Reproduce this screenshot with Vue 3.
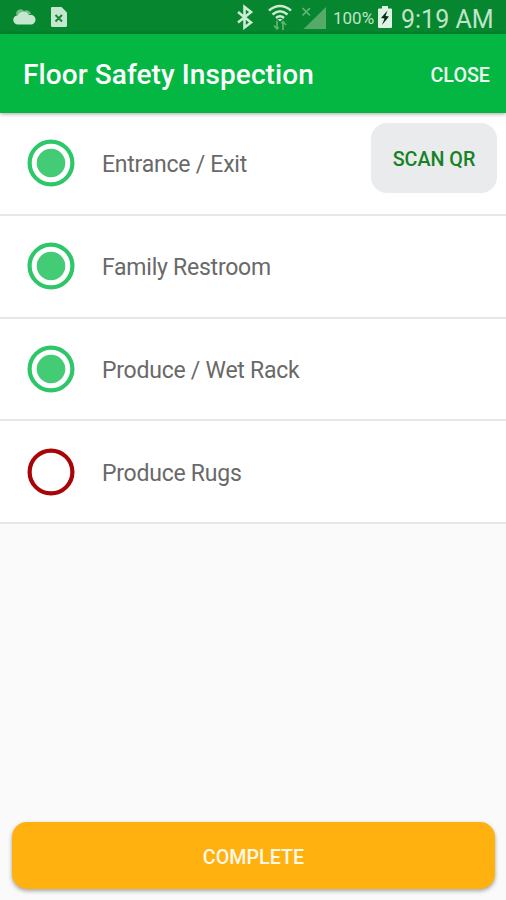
<script setup>
const items = [
  { label: 'Entrance / Exit', done: true, scan: true },
  { label: 'Family Restroom', done: true },
  { label: 'Produce / Wet Rack', done: true },
  { label: 'Produce Rugs', done: false },
]
</script>

<template>
  <div class="screen">
    <div class="status">
      <svg class="cloud" width="24" height="18" viewBox="0 0 24 18">
        <path d="M3.500 7A4.300 4.300 0 0 1 11 3A4.600 4.600 0 0 1 18 6" fill="#78bd88" />
        <path d="M5 16.500a4.600 4.600 0 0 1-.3-9.200A6.400 6.400 0 0 1 16 6.900a4.900 4.900 0 0 1 3 9.600Z" fill="#c6e7cf" />
      </svg>
      <svg class="sim" width="18" height="22" viewBox="0 0 18 22">
        <path d="M2 1h9.500L17 6.500V19.500a1.500 1.500 0 0 1-1.500 1.500H2.500A1.500 1.500 0 0 1 1 19.500V2a1 1 0 0 1 1-1Z" fill="#c6e7cf" />
        <path d="M5.500 9l6.500 6.500M12 9l-6.500 6.500" stroke="#168738" stroke-width="2" fill="none" />
      </svg>
      <svg class="bt" width="18" height="26" viewBox="0 0 18 26">
        <path d="M2 8l13 10.500-6.500 5V3L15 8 2 18.500" stroke="#cfebd6" stroke-width="2.600" fill="none" />
      </svg>
      <svg class="wifi" width="26" height="28" viewBox="0 0 26 28">
        <g fill="none" stroke="#cfebd6" stroke-width="2.500">
          <path d="M2 7.500Q13 -1.500 24 7.500" />
          <path d="M5.500 11.500Q13 5 20.500 11.500" />
          <path d="M9 15Q13 11.500 17 15" />
        </g>
        <path d="M13 18.500l-2.500-2.500h5Z" fill="#cfebd6" />
        <path d="M10 17.500v8M7 22.500l3 3.500 1.500-2M16 27v-8M14.500 20.500l1.500-2 3 3.500" stroke="#62b375" stroke-width="1.700" fill="none" />
      </svg>
      <svg class="signal" width="26" height="25" viewBox="0 0 26 25">
        <path d="M1.500 3l7.500 7.500M9 3l-7.500 7.500" stroke="#67b57a" stroke-width="1.700" />
        <path d="M25 2v22H2.500Z" fill="#55aa69" />
      </svg>
      <span class="percent">100%</span>
      <svg class="battery" width="14" height="24" viewBox="0 0 14 24">
        <path d="M4 1h6v2.500h3a1 1 0 0 1 1 1V22a1 1 0 0 1-1 1H1a1 1 0 0 1-1-1V4.500a1 1 0 0 1 1-1H4Z" fill="#dff3e4" />
        <path d="M9.500 5.500L3 13l3.500.5L4 20l7-8.500-3.500-.5Z" fill="#062b12" />
      </svg>
      <span class="clock">9:19 AM</span>
    </div>

    <header class="bar">
      <h1 class="title">Floor Safety Inspection</h1>
      <button class="close">CLOSE</button>
    </header>

    <ul class="list">
      <li v-for="item in items" :key="item.label" class="row">
        <svg class="mark" width="48" height="48" viewBox="0 0 48 48">
          <circle cx="24" cy="24" r="21.400" fill="#fff" :stroke="item.done ? '#2dc76a' : '#a80508'" stroke-width="4.200" />
          <circle v-if="item.done" cx="24" cy="24" r="14.300" fill="#43cb76" />
        </svg>
        <span class="label">{{ item.label }}</span>
        <button v-if="item.scan" class="scan">SCAN QR</button>
      </li>
    </ul>

    <footer class="footer">
      <button class="complete">COMPLETE</button>
    </footer>
  </div>
</template>

<style>
body {
  margin: 0;
  background: #fafafa;
}
</style>

<style scoped>
.screen {
  display: flex;
  flex-direction: column;
  width: 506px;
  height: 900px;
  overflow: hidden;
  background: #fafafa;
  font-family: Roboto, "Liberation Sans", sans-serif;
}
button {
  border: 0;
  padding: 0;
  background: none;
  font-family: inherit;
  font-weight: 500;
}
.status {
  display: flex;
  flex: none;
  align-items: center;
  height: 34px;
  background: #05862f;
  color: #c0e4c9;
  white-space: nowrap;
}
.status svg {
  flex: none;
}
.cloud {
  margin-left: 13px;
}
.sim {
  margin-left: 13px;
}
.bt {
  margin-left: 168px;
}
.wifi {
  margin-left: 13px;
}
.signal {
  margin-left: 8px;
}
.percent {
  width: 41px;
  margin-left: 6px;
  font-size: 17px;
  line-height: 34px;
  padding-top: 2px;
}
.battery {
  margin-left: 4px;
}
.clock {
  margin-left: 9px;
  padding-top: 5px;
  font-size: 25px;
  line-height: 34px;
}
.bar {
  position: relative;
  display: flex;
  flex: none;
  align-items: center;
  justify-content: space-between;
  height: 79px;
  box-sizing: border-box;
  padding: 0 16px 0 23px;
  background: #03b742;
  box-shadow: 0 1px 4px rgba(0, 0, 0, 0.35);
  color: #fff;
}
.title {
  margin: 0;
  padding-top: 2px;
  font-size: 28px;
  font-weight: 500;
  letter-spacing: 0.080px;
  line-height: 36px;
  white-space: nowrap;
}
.close {
  padding-top: 3px;
  color: #effbf2;
  font-size: 19.700px;
}
.list {
  flex: none;
  margin: 0;
  padding: 0;
  list-style: none;
}
.row {
  display: flex;
  align-items: center;
  height: 102.750px;
  box-sizing: border-box;
  padding: 0 9px 0 27px;
  border-bottom: 2px solid #e7e7e7;
  background: #fff;
}
.mark {
  flex: none;
}
.label {
  margin-left: 27px;
  padding-top: 4px;
  color: #696969;
  font-size: 23px;
  letter-spacing: -0.240px;
  line-height: 28px;
  white-space: nowrap;
}
.scan {
  width: 126px;
  height: 70px;
  margin: 0 0 10px auto;
  padding-top: 2px;
  border-radius: 16px;
  background: #e9ebec;
  color: #168126;
  font-size: 19.700px;
}
.footer {
  margin-top: auto;
  padding: 0 11px 11px 12px;
}
.complete {
  display: block;
  width: 100%;
  height: 67px;
  padding-top: 3px;
  border-radius: 15px;
  background: #ffb10f;
  box-shadow: 0 2px 4px rgba(0, 0, 0, 0.35);
  color: #fff8e8;
  font-size: 19.700px;
}
</style>
